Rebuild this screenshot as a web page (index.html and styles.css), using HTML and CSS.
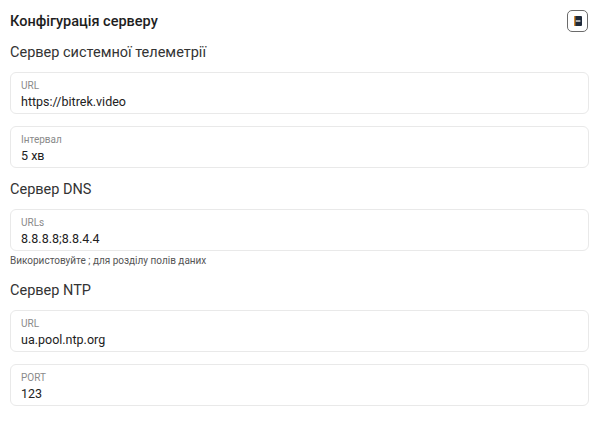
FILE: index.html
```html
<!DOCTYPE html>
<html lang="uk">

<head>
  <meta charset="UTF-8" />
  <meta name="viewport" content="width=device-width, initial-scale=1.0" />
  <title>Конфігурація серверу</title>
  <link rel="stylesheet" href="styles.css">
</head>

<body>
  <div class="panel">
    <div class="panel-header">
      <h3>Конфігурація серверу</h3>
      <button class="collapse-btn" title="Згорнути">
        <svg width="8" height="10" viewBox="0 0 8 10">
          <rect x="0" y="0" width="8" height="10" rx="1" fill="#1f2a3a" />
          <rect x="0" y="0" width="1.4" height="10" fill="#d9892b" />
          <rect x="1.8" y="4.3" width="4.6" height="1.4" fill="#e8e8e8" />
        </svg>
      </button>
    </div>

    <h4 class="first">Сервер системної телеметрії</h4>
    <div class="field">
      <label>URL</label>
      <div class="value">https://bitrek.video</div>
    </div>
    <div class="field">
      <label>Інтервал</label>
      <div class="value">5 хв</div>
    </div>

    <h4>Сервер DNS</h4>
    <div class="field with-hint">
      <label>URLs</label>
      <div class="value">8.8.8.8;8.8.4.4</div>
    </div>
    <p class="hint">Використовуйте ; для розділу полів даних</p>

    <h4>Сервер NTP</h4>
    <div class="field">
      <label>URL</label>
      <div class="value">ua.pool.ntp.org</div>
    </div>
    <div class="field">
      <label>PORT</label>
      <div class="value">123</div>
    </div>
  </div>
</body>

</html>
```

FILE: styles.css
```css
body {
  margin: 0;
  background-color: #fff;
  font-family: Roboto, "Noto Sans", sans-serif;
  color: #222;
}

.panel {
  padding: 10px 11px 0 10px;
}

.panel-header {
  display: flex;
  align-items: center;
  justify-content: space-between;
  height: 22px;
}

h3 {
  margin: 0;
  font-size: 14.5px;
  font-weight: 500;
  color: #1e1e1e;
}

h4 {
  margin: 12px 0 9px;
  font-size: 14.5px;
  line-height: 20px;
  font-weight: 400;
  color: #333;
}

h4.first {
  margin-top: 11px;
}

.collapse-btn {
  display: flex;
  align-items: center;
  justify-content: center;
  width: 21px;
  height: 22px;
  padding: 0;
  margin-right: 1px;
  background-color: #fff;
  border: 1.5px solid #6b6b6b;
  border-radius: 5px;
}

.field {
  display: flex;
  flex-direction: column;
  height: 42px;
  box-sizing: border-box;
  padding: 6px 10px 0;
  margin-bottom: 12px;
  border: 1px solid #e9e9e9;
  border-radius: 6px;
}

.field.with-hint {
  margin-bottom: 3px;
}

.field label {
  font-size: 10px;
  line-height: 14px;
  color: #8a8a8a;
}

.field .value {
  font-size: 12.5px;
  line-height: 17px;
  color: #222;
}

.hint {
  margin: 0 0 14px;
  font-size: 10px;
  line-height: 13px;
  color: #555;
}
```
